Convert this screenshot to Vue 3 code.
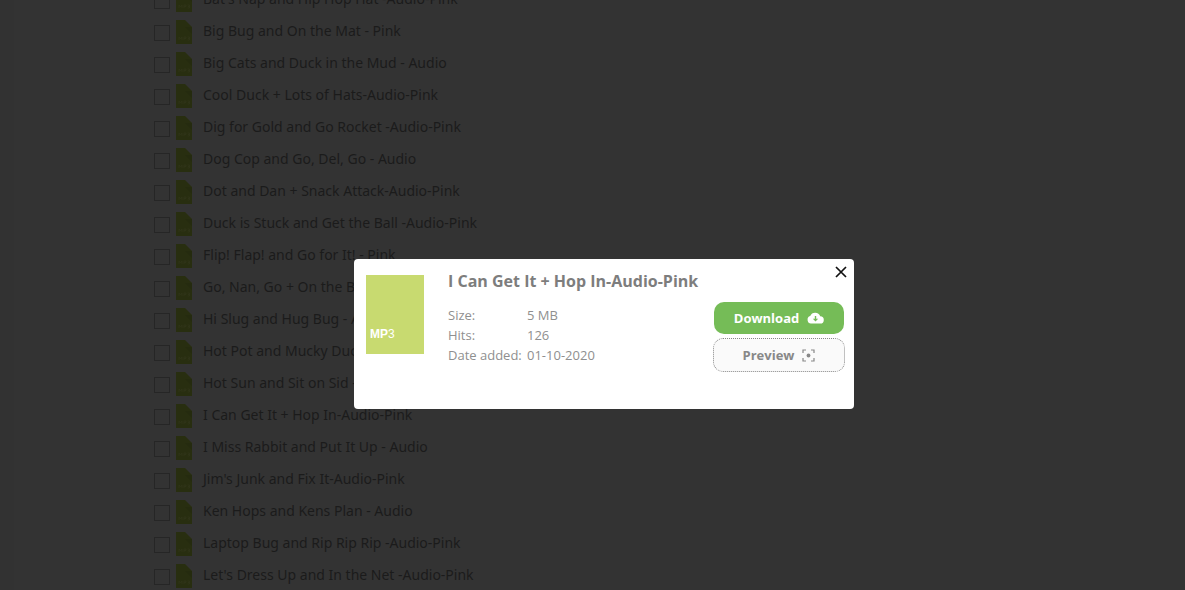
<script setup>
import { ref } from 'vue'

const files = ref([
  "Bat's Nap and Hip Hop Hat -Audio-Pink",
  'Big Bug and On the Mat - Pink',
  'Big Cats and Duck in the Mud - Audio',
  'Cool Duck + Lots of Hats-Audio-Pink',
  'Dig for Gold and Go Rocket -Audio-Pink',
  'Dog Cop and Go, Del, Go - Audio',
  'Dot and Dan + Snack Attack-Audio-Pink',
  'Duck is Stuck and Get the Ball -Audio-Pink',
  'Flip! Flap! and Go for It! - Pink',
  'Go, Nan, Go + On the Bus-Audio-Pink',
  'Hi Slug and Hug Bug - Audio',
  'Hot Pot and Mucky Duck - Audio',
  'Hot Sun and Sit on Sid - Audio',
  'I Can Get It + Hop In-Audio-Pink',
  'I Miss Rabbit and Put It Up - Audio',
  "Jim's Junk and Fix It-Audio-Pink",
  'Ken Hops and Kens Plan - Audio',
  'Laptop Bug and Rip Rip Rip -Audio-Pink',
  "Let's Dress Up and In the Net -Audio-Pink"
])

const details = [
  ['Size:', '5 MB'],
  ['Hits:', '126'],
  ['Date added:', '01-10-2020']
]
</script>

<template>
  <div class="page">
    <main class="sheet">
      <ul class="files">
        <li v-for="(name, i) in files" :key="name" class="row">
          <input :id="'file-' + i" class="tick" type="checkbox" />
          <svg class="doc" viewBox="0 0 16 24" aria-hidden="true">
            <path d="M0 0H9L16 7V24H0Z" fill="#282e10" />
            <path d="M9 7H16V14Z" fill="#252b0f" />
            <path d="M3 20v-3l1.500 2 1.500-2v3M8 20v-3h2v1.500H8M11.500 17H13.500V20H11.500M12 18.500H13.500" fill="none" stroke="#303519" stroke-width="0.800" />
          </svg>
          <label class="name" :for="'file-' + i">{{ name }}</label>
        </li>
      </ul>
    </main>

    <div class="overlay">
      <section class="modal" role="dialog" aria-labelledby="title">
        <div class="thumb">MP<span>3</span></div>
        <div class="info">
          <h2 id="title">I Can Get It + Hop In-Audio-Pink</h2>
          <table>
            <tbody>
              <tr v-for="[label, value] in details" :key="label">
                <th scope="row">{{ label }}</th>
                <td>{{ value }}</td>
              </tr>
            </tbody>
          </table>
        </div>
        <div class="actions">
          <button class="btn download" type="button">
            Download
            <svg width="17" height="12" viewBox="0 0 17 12" aria-hidden="true">
              <path d="M4 11.500a3.800 3.800 0 0 1-.8-7.400A5.300 5.300 0 0 1 13.200 4.300 3.600 3.600 0 0 1 13.200 11.500Z" fill="#fff" />
              <path d="M7.800 4h1.400v2.700h2L8.500 9.500 5.800 6.700h2Z" fill="#75bc57" />
            </svg>
          </button>
          <button class="btn preview" type="button">
            Preview
            <svg width="13" height="13" viewBox="0 0 13 13" aria-hidden="true">
              <path d="M1 4V1H4M9 1H12V4M12 9V12H9M4 12H1V9" fill="none" stroke="#888" stroke-width="1.200" />
              <circle cx="6.500" cy="6.500" r="1.900" fill="#888" />
            </svg>
          </button>
        </div>
        <button class="close" type="button" aria-label="Close">
          <svg width="12" height="12" viewBox="0 0 12 12" aria-hidden="true">
            <path d="M1 1L11 11M11 1L1 11" stroke="#111" stroke-width="1.700" />
          </svg>
        </button>
      </section>
    </div>
  </div>
</template>

<style>
body {
  margin: 0;
  background: #333;
}
</style>

<style scoped>
.page {
  position: relative;
  height: 100vh;
  overflow: hidden;
  background: #323232;
  font-family: "Open Sans", "Noto Sans", sans-serif;
}
.sheet {
  margin-left: 14px;
  background: #333;
}
.files {
  list-style: none;
  margin: -16px 0 0;
  padding: 0 0 0 140px;
}
.row {
  display: flex;
  align-items: center;
  height: 32px;
}
.tick {
  appearance: none;
  box-sizing: border-box;
  width: 16px;
  height: 16px;
  margin: 2px 6px 0 0;
  border: 1px solid #262626;
}
.doc {
  width: 16px;
  height: 24px;
  margin-right: 11px;
}
.name {
  padding-bottom: 2px;
  font-family: "Noto Sans", "Open Sans", sans-serif;
  font-size: 14px;
  line-height: 20px;
  color: #1b1b1b;
}
.overlay {
  position: absolute;
  inset: 0;
  display: flex;
  align-items: center;
  justify-content: center;
  padding: 78px 0 0 23px;
}
.modal {
  position: relative;
  box-sizing: border-box;
  display: flex;
  align-items: flex-start;
  width: 500px;
  min-height: 150px;
  padding: 12px 9px 12px 12px;
  border-radius: 4px;
  background: #fff;
}
.thumb {
  box-sizing: border-box;
  width: 58px;
  height: 79px;
  margin: 4px 24px 0 0;
  padding: 51px 0 0 4px;
  background: #c8da70;
  color: #fff;
  font: bold 12px/16px "Liberation Sans", sans-serif;
}
.thumb span {
  font-weight: normal;
}
.info {
  flex: 1;
}
h2 {
  margin: 0 0 14px;
  font-size: 16px;
  line-height: 20px;
  color: #7d7d7d;
  white-space: nowrap;
}
table {
  border-collapse: collapse;
  font-size: 13px;
  line-height: 20px;
  color: #8f8f8f;
}
th,
td {
  padding: 0;
  font-weight: normal;
  text-align: left;
  white-space: nowrap;
}
th {
  width: 79px;
}
.actions {
  display: flex;
  flex-direction: column;
  align-items: center;
  gap: 4px;
  padding-top: 31px;
}
.btn {
  box-sizing: border-box;
  display: flex;
  align-items: center;
  justify-content: center;
  gap: 8px;
  border-radius: 10px;
  font: bold 13px/20px "Open Sans", "Noto Sans", sans-serif;
}
.download {
  width: 130px;
  height: 32px;
  border: 0;
  background: #75bc57;
  color: #fff;
}
.preview {
  width: 132px;
  height: 34px;
  border: 1px dotted #888;
  background: #fafafa;
  color: #888;
}
.close {
  position: absolute;
  top: 7px;
  right: 7px;
  padding: 0;
  border: 0;
  background: none;
  line-height: 0;
}
</style>
